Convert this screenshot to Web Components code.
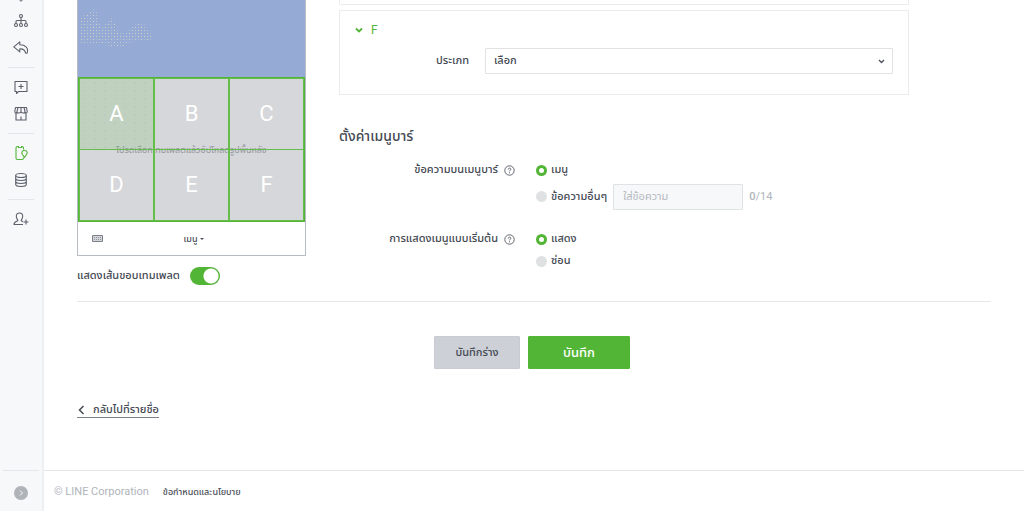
<!DOCTYPE html>
<html lang="th">
<head>
<meta charset="utf-8">
<meta name="viewport" content="width=device-width, initial-scale=1">
<title>LINE Official Account Manager</title>
<style>
    body {
        margin: 0;
        background: #fff;
        color: #444953;
        font-family: Roboto, "Noto Sans Thai", "Liberation Sans", sans-serif;
        font-size: 11px;
        line-height: 16px;
    }
</style>
</head>
<body>
<app-shell>
    <side-nav slot="nav"></side-nav>
    <menu-preview slot="preview"></menu-preview>
    <action-panel slot="form" data-first></action-panel>
    <action-panel slot="form" data-title="F"></action-panel>
    <menubar-settings slot="form"></menubar-settings>
    <form-actions slot="actions"></form-actions>
    <page-footer slot="footer"></page-footer>
</app-shell>

<script>
// Base class: opens the shadow root and paints the template
class BaseElement extends HTMLElement {
    constructor() {
        super();
        this._sDOM = this.attachShadow({mode: 'open'});
    }

    connectedCallback() {
        this._sDOM.innerHTML = `<style>
            * { box-sizing: border-box; }
            button, input, select { font: inherit; color: inherit; margin: 0; }
            button { cursor: pointer; }
            svg { display: block; }
            ${this._style()}
        </style>${this._template()}`;
    }

    _style() { return ''; }
    _template() { return '<slot></slot>'; }
}

class AppShell extends BaseElement {
    _style() {
        return `
        :host {
            display: grid;
            grid-template-columns: 44px minmax(0, 1fr);
            min-height: 100vh;
        }
        .page { display: flex; flex-direction: column; }
        main { flex: 1; padding: 0 33px; }
        .columns {
            display: grid;
            grid-template-columns: 229px minmax(0, 570px);
            gap: 33px;
            padding-bottom: 16px;
            border-bottom: 1px solid #e6e7ea;
        }
        `;
    }
    _template() {
        return `
        <slot name="nav"></slot>
        <div class="page">
            <main>
                <div class="columns">
                    <slot name="preview"></slot>
                    <div><slot name="form"></slot></div>
                </div>
                <slot name="actions"></slot>
            </main>
            <slot name="footer"></slot>
        </div>`;
    }
}
customElements.define('app-shell', AppShell);

const ICONS = {
    tree: '<path d="M8 4v6.500M3 10.500V8.500q0-1 1-1h8q1 0 1 1v2"/><circle cx="8" cy="3" r="1.500"/><circle cx="3" cy="12" r="1.500"/><circle cx="8" cy="12" r="1.500"/><circle cx="13" cy="12" r="1.500"/>',
    reply: '<path d="M6.800 1.800.8 6.800l6 5V8.900c3.500-.2 5.200.6 5.800 4.300h1.400c2-5.200-1.500-8.400-7.200-8.400z"/>',
    chat: '<path d="M2 2.500h12v10H5.500l-2 2v-2H2zM8 5v5M5.500 7.500h5"/>',
    shop: '<path d="M2.500 1.500h11l.7 4c0 2-2.100 2-2.100 0 0 2-4.100 2-4.100 0 0 2-4.100 2-4.100 0 0 2-2.100 2-2.100 0zM5 1.500 4 5.500M8 1.500v4M11 1.500l1 4M3 7.500v6.500h10V7.500M8 14v-3.500"/>',
    rich: '<path d="M10.500 4.500V3q0-1.500-1.500-1.500H8.500v1h-3v-1H4.500Q3 1.500 3 3v10q0 1.500 1.500 1.500H9q1.500 0 1.500-1.500v-.5"/><path d="M11.500 12.500 9.300 9.300a2.600 2.600 0 1 1 4.400 0z"/>',
    data: '<ellipse cx="8" cy="3.500" rx="5.300" ry="2"/><path d="M2.700 3.500v9c0 2.600 10.600 2.600 10.600 0v-9M2.700 6.500c0 2.600 10.600 2.600 10.600 0M2.700 9.500c0 2.600 10.600 2.600 10.600 0"/>',
    user: '<path d="M10 13.500H1c0-2.700 1.500-2.700 3.800-3.700.5-.5-1.500-2-1.500-4.500 0-4.500 6.400-4.500 6.400 0 0 2.500-2 4-1.500 4.500l1.800.9M13 8.500v5M10.500 11h5"/>'
};

class SideNav extends BaseElement {
    _style() {
        return `
        :host {
            display: flex;
            flex-direction: column;
            background: #f7f8fa;
            border-right: 2px solid #edeff1;
            color: #5b606b;
        }
        nav { flex: 1; }
        .above { height: 7px; }
        .above svg { margin: 0 auto; }
        a {
            display: flex;
            align-items: center;
            justify-content: center;
            height: 27px;
            color: inherit;
        }
        a svg { width: 16px; height: 16px; fill: none; stroke: currentColor; stroke-width: 1.1; stroke-linejoin: round; }
        a.active { color: #53b535; }
        hr { margin: 6px 8px 5px; border: 0; border-top: 1px solid #e3e5e8; }
        .bottom { display: flex; justify-content: center; margin: 0 3px; height: 41px; padding-top: 15px; border-top: 1px solid #e6e7ea; }
        .bottom button { width: 14px; height: 14px; padding: 0; border: 0; border-radius: 50%; background: #b0b4b9; color: #f7f8fa; }
        `;
    }
    _template() {
        const link = (icon, label, active) =>
            `<a href="#${icon}" aria-label="${label}" class="${active ? 'active' : ''}"><svg viewBox="0 0 16 16">${ICONS[icon]}</svg></a>`;
        return `
        <nav>
            <div class="above"><svg width="4" height="2" viewBox="0 0 4 2"><path d="M0 0h4L2 2z" fill="#8b8f98"/></svg></div>
            ${link('tree', 'Step messages')}${link('reply', 'Auto response')}<hr>
            ${link('chat', 'Message items')}${link('shop', 'Shop card')}<hr>
            ${link('rich', 'Rich menu', true)}${link('data', 'Data')}<hr>
            ${link('user', 'Gain friends')}
        </nav>
        <div class="bottom"><button type="button" aria-label="Expand">
            <svg width="14" height="14" viewBox="0 0 14 14" fill="none" stroke="currentColor"><path d="M6 4.500 8.500 7 6 9.500"/></svg>
        </button></div>`;
    }
}
customElements.define('side-nav', SideNav);

class MenuPreview extends BaseElement {
    _style() {
        return `
        .phone { border: 1px solid #b7bbc6; border-top: 0; }
        .chat { height: 77px; background: #95abd6; }
        .area { position: relative; background: #d6d7da; }
        .area p { position: absolute; inset: 0; display: flex; align-items: center; justify-content: center; margin: 0; color: #92959e; font-size: 9px; white-space: nowrap; }
        .cells {
            position: relative;
            display: grid;
            grid-template-columns: repeat(3, 1fr);
            grid-auto-rows: 70px;
            gap: 1px 2px;
            border: 2px solid #53b535;
        }
        .cells span {
            display: flex;
            align-items: center;
            justify-content: center;
            color: #fff;
            font-size: 22px;
            outline: 1px solid #65bd4a;
        }
        .cells .selected {
            background: radial-gradient(circle, rgba(150, 170, 200, .5) 0, transparent 1px) 0 0 / 10px 8px, rgba(83, 181, 53, .16);
        }
        .bar {
            display: grid;
            grid-template-columns: 1fr auto 1fr;
            align-items: center;
            height: 33px;
            padding: 0 10px 0 14px;
            font-size: 9px;
            font-weight: 500;
        }
        .bar button { display: flex; align-items: center; gap: 2px; padding: 0; border: 0; background: none; }
        .toggle { display: flex; align-items: center; gap: 10px; padding-top: 11px; font-weight: 500; }
        .toggle input {
            appearance: none;
            width: 30px;
            height: 18px;
            border-radius: 9px;
            background: radial-gradient(circle at 21px 9px, #fff 7px, transparent 8px), #53b535;
        }
        .toggle input:not(:checked) { background: radial-gradient(circle at 9px 9px, #fff 7px, transparent 8px), #c8cace; }
        `;
    }
    _template() {
        const cells = ['A', 'B', 'C', 'D', 'E', 'F']
            .map((c, i) => `<span class="${i ? '' : 'selected'}">${c}</span>`).join('');
        return `
        <div class="phone">
            <div class="chat">
                <svg width="80" height="52" viewBox="0 0 80 52">
                    <defs><pattern id="dots" width="6" height="6" patternUnits="userSpaceOnUse">
                        <path d="M0 0h1v1H0zM3 3h1v1H3z" fill="#d3d1c4"/>
                        <path d="M3 0h1v1H3zM0 3h1v1H0z" fill="#b5c0d3"/>
                    </pattern></defs>
                    <path d="M1 20 8 14l7-5 4 4v9l6 4 7-8h4l2 10 8 6 6-6 8-5 6 1 4 6 4 6v6H55l-14 6-14-3-12-1-12 1-2-10z" fill="url(#dots)"/>
                </svg>
            </div>
            <div class="area">
                <p>โปรดเลือกเทมเพลตแล้วอัปโหลดรูปพื้นหลัง</p>
                <div class="cells">${cells}</div>
            </div>
            <div class="bar">
                <svg width="11" height="8" viewBox="0 0 11 8"><path d="M.5.5h10v6H.5z" fill="#d3d5d9" stroke="#7d818a"/><path d="M2 2.500h7M2 4.500h7" stroke="#8f939b" stroke-dasharray="1 1"/></svg>
                <button type="button">เมนู <svg width="4" height="2" viewBox="0 0 4 2"><path d="M0 0h4L2 2z" fill="#4a4f59"/></svg></button>
            </div>
        </div>
        <label class="toggle">แสดงเส้นขอบเทมเพลต <input type="checkbox" role="switch" checked></label>`;
    }
}
customElements.define('menu-preview', MenuPreview);

class ActionPanel extends BaseElement {
    _style() {
        return `
        :host { display: block; border: 1px solid #e9ebed; padding: 10px 15px 20px; margin-top: 5px; }
        :host([data-first]) { margin-top: 0; border-top: 0; padding: 4px 0 0; border-radius: 0 0 2px 2px; }
        .title { display: flex; align-items: center; gap: 8px; padding: 0; border: 0; background: none; color: #53b535; font-size: 12px; line-height: 18px; }
        .row { display: grid; grid-template-columns: 114px minmax(0, 1fr); align-items: center; gap: 16px; padding-top: 9px; }
        .row label { text-align: right; font-weight: 500; }
        .select { display: grid; align-items: center; }
        .select > * { grid-area: 1 / 1; }
        .select svg { justify-self: end; margin-right: 8px; pointer-events: none; }
        select { appearance: none; width: 100%; height: 26px; padding: 0 8px; border: 1px solid #dfe3e4; border-radius: 1px; background: #fff; font-weight: 500; }
        `;
    }
    _template() {
        const title = this.dataset.title;
        if (!title) return '';
        return `
        <button class="title" type="button" aria-expanded="true">
            <svg width="8" height="6" viewBox="0 0 8 6" fill="none" stroke="currentColor" stroke-width="1.800"><path d="m1 1.500 3 3 3-3"/></svg>${title}
        </button>
        <div class="row">
            <label for="type">ประเภท</label>
            <div class="select">
                <select id="type"><option>เลือก</option></select>
                <svg width="7" height="5" viewBox="0 0 7 5" fill="none" stroke="#4a4f59" stroke-width="1.300"><path d="m1 1 2.500 2.500L6 1"/></svg>
            </div>
        </div>`;
    }
}
customElements.define('action-panel', ActionPanel);

// One line of the form: right aligned caption with help, controls in the slot
class FormRow extends BaseElement {
    _style() {
        return `
        :host { display: grid; grid-template-columns: 176px minmax(0, 1fr); gap: 21px; }
        .caption { display: flex; align-items: center; justify-content: flex-end; gap: 6px; height: 22px; font-weight: 500; }
        .caption button { padding: 0; border: 0; background: none; }
        `;
    }
    _template() {
        return `
        <div class="caption"><span>${this.dataset.label}</span>
            <button type="button" aria-label="Help"><svg width="11" height="11" viewBox="0 0 11 11" fill="none" stroke="#62666f"><circle cx="5.500" cy="5.500" r="4.700"/><path d="M4.200 4.500c0-1.900 2.700-1.700 2.700-.2 0 1-1.400 1-1.400 2.100M5.500 7.300v1"/></svg></button>
        </div>
        <div><slot></slot></div>`;
    }
}
customElements.define('form-row', FormRow);

class MenubarSettings extends BaseElement {
    _style() {
        return `
        :host { display: block; padding-top: 30px; }
        h2 { margin: 0 0 12px; font-size: 14px; line-height: 22px; font-weight: 500; }
        form-row + form-row { margin-top: 16px; }
        .line { display: flex; align-items: center; gap: 6px; min-height: 22px; }
        .tall { min-height: 31px; }
        label { display: flex; align-items: center; gap: 4px; font-weight: 500; }
        input[type=radio] { appearance: none; width: 11px; height: 11px; border-radius: 50%; background: #dfe2e3; }
        input[type=radio]:checked { border: 3px solid #53b535; background: #fff; }
        input[type=text] { width: 130px; height: 26px; padding: 0 9px; border: 1px solid #dfe2e3; border-radius: 1px; background: #f7f8fa; }
        input::placeholder { color: #b4b8bf; opacity: 1; }
        .count { color: #b0b4bb; }
        b { font-weight: 500; }
        `;
    }
    _template() {
        return `
        <h2>ตั้งค่าเมนูบาร์</h2>
        <form-row data-label="ข้อความบนเมนูบาร์">
            <div class="line"><label><input type="radio" name="text" checked>เมนู</label></div>
            <div class="line tall">
                <label><input type="radio" name="text">ข้อความอื่นๆ</label>
                <input type="text" placeholder="ใส่ข้อความ" aria-label="ข้อความอื่นๆ" disabled>
                <span class="count"><b>0</b>/14</span>
            </div>
        </form-row>
        <form-row data-label="การแสดงเมนูแบบเริ่มต้น">
            <div class="line"><label><input type="radio" name="show" checked>แสดง</label></div>
            <div class="line"><label><input type="radio" name="show">ซ่อน</label></div>
        </form-row>`;
    }
}
customElements.define('menubar-settings', MenubarSettings);

class FormActions extends BaseElement {
    _style() {
        return `
        .buttons { display: flex; justify-content: center; gap: 8px; padding: 34px 4px 34px 0; }
        button { width: 86px; height: 33px; padding: 0; border: 1px solid #c8cbd1; border-radius: 1px; background: #cdd0d6; font-weight: 500; }
        .save { width: 102px; border-color: #53b535; background: #53b535; color: #fff; font-size: 13px; }
        a { display: flex; width: fit-content; align-items: center; gap: 8px; border-bottom: 1px solid #7b7f87; color: inherit; font-weight: 500; line-height: 14px; text-decoration: none; }
        `;
    }
    _template() {
        return `
        <div class="buttons">
            <button type="button">บันทึกร่าง</button>
            <button type="button" class="save">บันทึก</button>
        </div>
        <a href="#list"><svg width="8" height="10" viewBox="0 0 8 10" fill="none" stroke="currentColor" stroke-width="1.500"><path d="M6.500 1 2.500 5l4 4"/></svg>กลับไปที่รายชื่อ</a>`;
    }
}
customElements.define('form-actions', FormActions);

class PageFooter extends BaseElement {
    _style() {
        return `
        :host { display: block; }
        footer { display: flex; align-items: center; gap: 14px; height: 41px; padding: 2px 10px 0; border-top: 1px solid #e6e7ea; color: #b0b4bb; }
        a { color: #4a4f59; font-size: 9px; font-weight: 500; text-decoration: none; }
        `;
    }
    _template() {
        return `<footer><span>© LINE Corporation</span><a href="#terms">ข้อกำหนดและนโยบาย</a></footer>`;
    }
}
customElements.define('page-footer', PageFooter);
</script>
</body>
</html>
